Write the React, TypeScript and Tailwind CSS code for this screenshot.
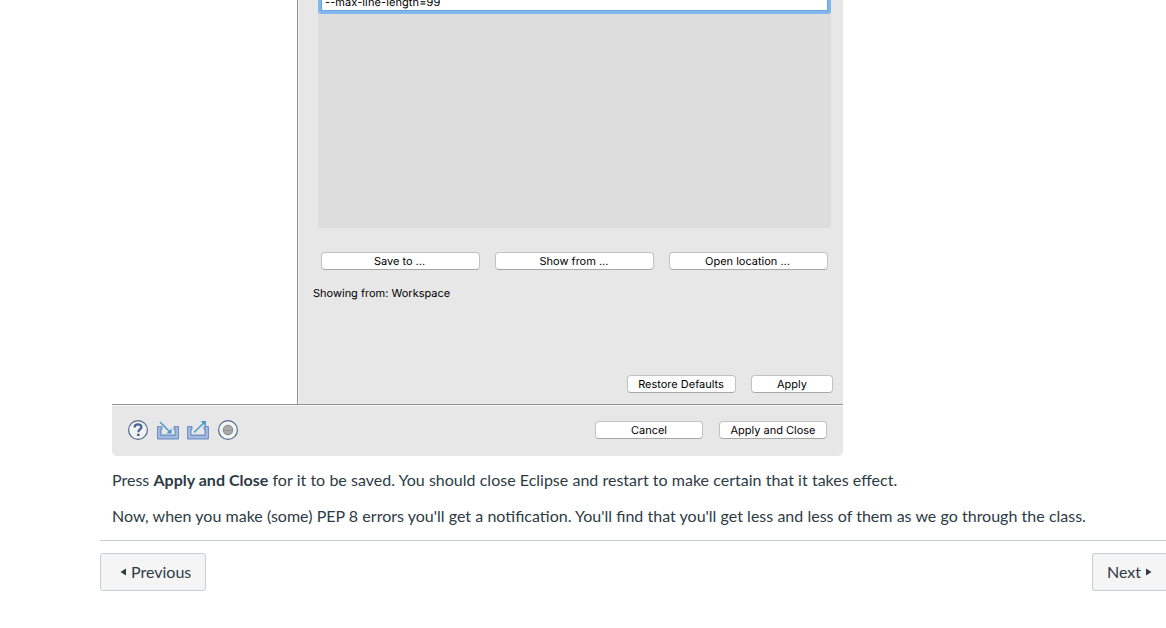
import type { ReactNode } from "react";

function MacButton({ className, children }: { className: string; children: ReactNode }) {
  return (
    <button
      className={`flex h-[18px] shrink-0 items-center justify-center rounded-[4px] border border-[#c2c2c2] border-b-[#a8a8a8] bg-white font-[Inter,sans-serif] text-[11px] leading-none whitespace-nowrap text-black [text-rendering:geometricPrecision] ${className}`}
    >
      {children}
    </button>
  );
}

function HelpIcon() {
  return (
    <svg width="22" height="22" viewBox="0 0 22 22" fill="none">
      <circle cx="11" cy="11" r="9.4" fill="#f1f2f4" stroke="#536a8e" strokeWidth="1.2" />
      <path d="M7.6 8.6C7.6 6.2 9.2 5.3 11 5.3s3.4 1 3.4 2.8c0 2.4-3.1 2.4-3.1 5.2" stroke="#4a6793" strokeWidth="2.3" />
      <path d="M10 14.8h2.6v2.3H10z" fill="#4a6793" />
    </svg>
  );
}

function Tray() {
  return (
    <>
      <path
        d="M1.5 7.5H6v3H5v5.5h14v-5.5h-1v-3h4.5v12.5h-21z"
        fill="#88a5d5"
        stroke="#7390c0"
        strokeWidth="1"
      />
      <path d="M4.5 9H3v9.2h18V9h-1.5" stroke="#b9d0ee" />
    </>
  );
}

function ImportIcon() {
  return (
    <svg width="24" height="22" viewBox="0 0 24 22" fill="none">
      <Tray />
      <path d="M4 3l9.5 9.5" stroke="#4a9cc5" strokeWidth="1.6" />
      <path d="M15.6 14.6V9.4l-5.2 5.2z" fill="#4a9cc5" />
    </svg>
  );
}

function ExportIcon() {
  return (
    <svg width="24" height="22" viewBox="0 0 24 22" fill="none">
      <Tray />
      <path d="M8 13.5L18 3.8" stroke="#4a9cc5" strokeWidth="1.6" />
      <path d="M20 2v5.4L14.6 2z" fill="#4a9cc5" />
    </svg>
  );
}

function RecordIcon() {
  return (
    <svg width="22" height="22" viewBox="0 0 22 22" fill="none">
      <circle cx="11" cy="11" r="9.4" fill="#f4f4f5" stroke="#536a8e" strokeWidth="1.2" />
      <circle cx="11" cy="11" r="4.8" fill="#a9a9a9" stroke="#868686" />
      <path d="M6.5 11.5h9" stroke="#979797" />
    </svg>
  );
}

function PreferencesDialog() {
  return (
    <section className="ml-[112px] h-[456px] w-[731px] overflow-hidden rounded-b-[5px] bg-[#e7e7e7]">
      <div className="flex h-[404px]">
        <div className="w-[185px] shrink-0 bg-white" />
        <div className="w-px shrink-0 bg-[#929292]" />
        <div className="w-px shrink-0 bg-[#f5f5f5]" />
        <div className="flex min-w-0 flex-1 flex-col">
          <div className="ml-[19px] h-[228px] w-[513px] shrink-0 rounded-b-[3px] border-b border-[#d9d9d9] bg-[#dddddd]">
            <div className="h-[14px] rounded-b-[3px] bg-[#82b7ee] px-[3px] pb-[3px]">
              <div className="flex h-[11px] items-end border-x border-b border-[#6ba2da] bg-white pl-[3px] font-[Inter,sans-serif] text-[11px] leading-[14px] tracking-[0.1px] text-black [text-rendering:geometricPrecision]">
                <div className="mb-px">--max-line-length=99</div>
              </div>
            </div>
          </div>
          <div className="mt-6 ml-[22px] flex gap-[15px]">
            <MacButton className="w-[159px] pr-0.5">Save to ...</MacButton>
            <MacButton className="w-[159px] pr-px">Show from ...</MacButton>
            <MacButton className="w-[159px] pr-0.5">Open location ...</MacButton>
          </div>
          <p className="mt-4 ml-[14px] font-[Inter,sans-serif] text-[11px] leading-[14px] text-black [text-rendering:geometricPrecision]">
            Showing from: Workspace
          </p>
          <div className="mt-[75px] mr-[10px] flex justify-end gap-[15px]">
            <MacButton className="w-[109px] pr-px">Restore Defaults</MacButton>
            <MacButton className="w-[82px]">Apply</MacButton>
          </div>
        </div>
      </div>
      <div className="flex h-[52px] items-start justify-between border-t border-[#929292] pr-4 pl-[15px] shadow-[inset_0_1px_0_#f7f7f7]">
        <div className="flex pt-[14px]">
          <HelpIcon />
          <span className="ml-[7px]"><ImportIcon /></span>
          <span className="ml-[6px]"><ExportIcon /></span>
          <span className="ml-[7px]"><RecordIcon /></span>
        </div>
        <div className="flex gap-4 pt-4">
          <MacButton className="w-[108px]">Cancel</MacButton>
          <MacButton className="w-[108px]">Apply and Close</MacButton>
        </div>
      </div>
    </section>
  );
}

export default function App() {
  return (
    <main className="h-[628px] w-full overflow-hidden bg-white font-[Lato,sans-serif] text-base leading-6 text-[#2d3b45]">
      <PreferencesDialog />
      <div className="ml-[112px] flex flex-col gap-3 pt-3 whitespace-nowrap [word-spacing:0.11px]">
        <p>
          Press <strong className="font-bold">Apply and Close</strong> for it to be saved. You should close Eclipse and restart to make certain that it takes effect.
        </p>
        <p>
          Now, when you make (some) PEP 8 errors you'll get a notification. You'll find that you'll get less and less of them as we go through the class.
        </p>
      </div>
      <nav className="mt-3 ml-[100px] flex justify-between border-t border-[#c7cdd1] pt-3">
        <button className="flex h-[38px] w-[106px] items-center rounded-[3px] border border-[#c7cdd1] bg-[#f5f5f5] pl-[19px]">
          <svg className="mr-[5px]" width="6" height="8" viewBox="0 0 6 8"><path d="M6 .5v7L.5 4z" fill="#2d3b45" /></svg>
          Previous
        </button>
        <button className="flex h-[38px] w-[74px] items-center rounded-l-[3px] border border-r-0 border-[#c7cdd1] bg-[#f5f5f5] pl-[14px]">
          Next
          <svg className="ml-[5px]" width="6" height="8" viewBox="0 0 6 8"><path d="M0 .5v7L5.5 4z" fill="#2d3b45" /></svg>
        </button>
      </nav>
    </main>
  );
}
